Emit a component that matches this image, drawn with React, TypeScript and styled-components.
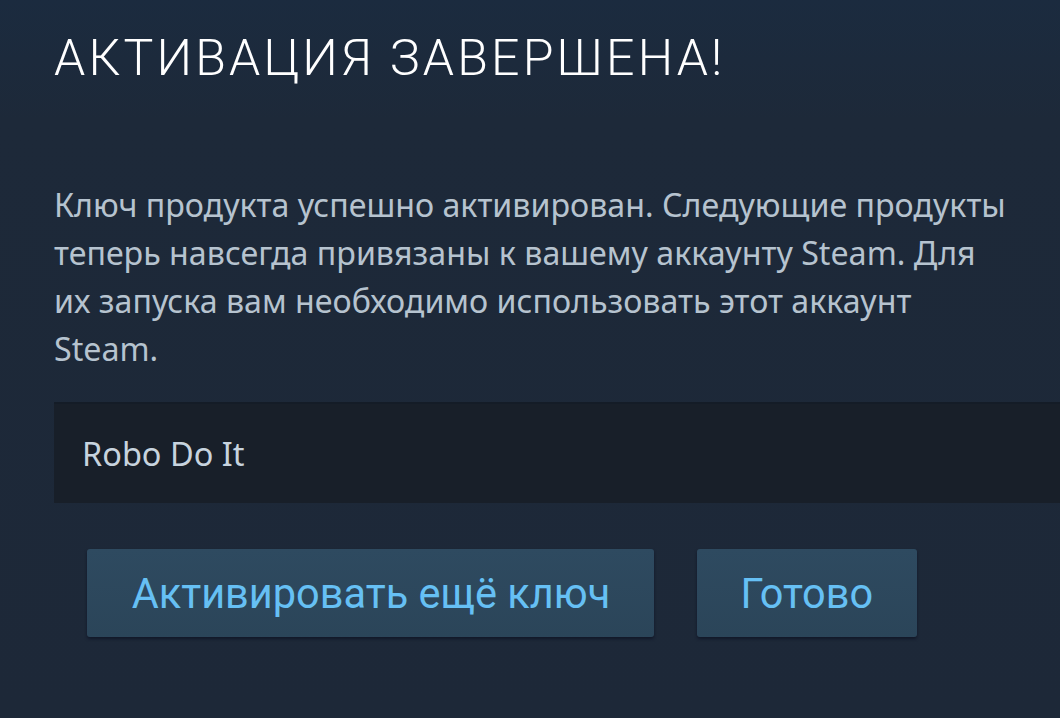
import React from 'react';
import styled, { createGlobalStyle } from 'styled-components';

const GlobalStyle = createGlobalStyle`
  html, body {
    margin: 0;
    padding: 0;
    width: 1060px;
    height: 718px;
    overflow: hidden;
    background: #1d2838;
  }
`;

const Page = styled.div`
  width: 1060px;
  height: 718px;
  overflow: hidden;
  background: linear-gradient(180deg, #1b2b3f 0%, #1d2939 120px, #1d2838 100%);
  box-sizing: border-box;
  padding: 28px 0 0 54px;
`;

const Title = styled.h1`
  margin: 0;
  font-family: Roboto, "Liberation Sans", sans-serif;
  font-weight: 300;
  font-size: 50px;
  letter-spacing: 3.15px;
  line-height: 60px;
  color: #ffffff;
`;

const Description = styled.p`
  margin: 93px 0 0 0;
  width: 962px;
  font-family: "Noto Sans", "Open Sans", sans-serif;
  font-size: 32.2px;
  line-height: 48px;
  color: #b6c3cf;
`;

const ProductList = styled.div`
  margin-top: 29px;
  width: 1100px;
  height: 101px;
  box-sizing: border-box;
  background: #181f29;
  border-top: 2px solid #141c27;
  display: flex;
  align-items: center;
  padding-left: 28px;
`;

const ProductName = styled.span`
  font-family: "Noto Sans", "Open Sans", sans-serif;
  font-size: 32.5px;
  color: #c7d3de;
`;

const Actions = styled.div`
  display: flex;
  gap: 43px;
  margin: 46px 0 0 33px;
`;

const Button = styled.button<{ $width: number }>`
  width: ${p => p.$width}px;
  height: 88px;
  border: none;
  border-radius: 3px;
  background: linear-gradient(180deg, #2e4a60 0%, #2b4559 100%);
  box-shadow: 0 2px 3px rgba(10, 14, 30, 0.6);
  color: #66c0f4;
  font-family: Roboto, "Liberation Sans", sans-serif;
  font-size: 43px;
  padding: 0;
  display: flex;
  align-items: center;
  justify-content: center;
`;

const Label = styled.span`
  display: inline-block;
  transform: scaleX(0.965);
  white-space: nowrap;
`;

export default function App() {
  return (
    <Page>
      <GlobalStyle />
      <Title>АКТИВАЦИЯ ЗАВЕРШЕНА!</Title>
      <Description>
        Ключ продукта успешно активирован. Следующие продукты теперь навсегда привязаны к вашему аккаунту Steam. Для их запуска вам необходимо использовать этот аккаунт Steam.
      </Description>
      <ProductList>
        <ProductName>Robo Do It</ProductName>
      </ProductList>
      <Actions>
        <Button $width={567}>
          <Label>Активировать ещё ключ</Label>
        </Button>
        <Button $width={220}>
          <Label>Готово</Label>
        </Button>
      </Actions>
    </Page>
  );
}
